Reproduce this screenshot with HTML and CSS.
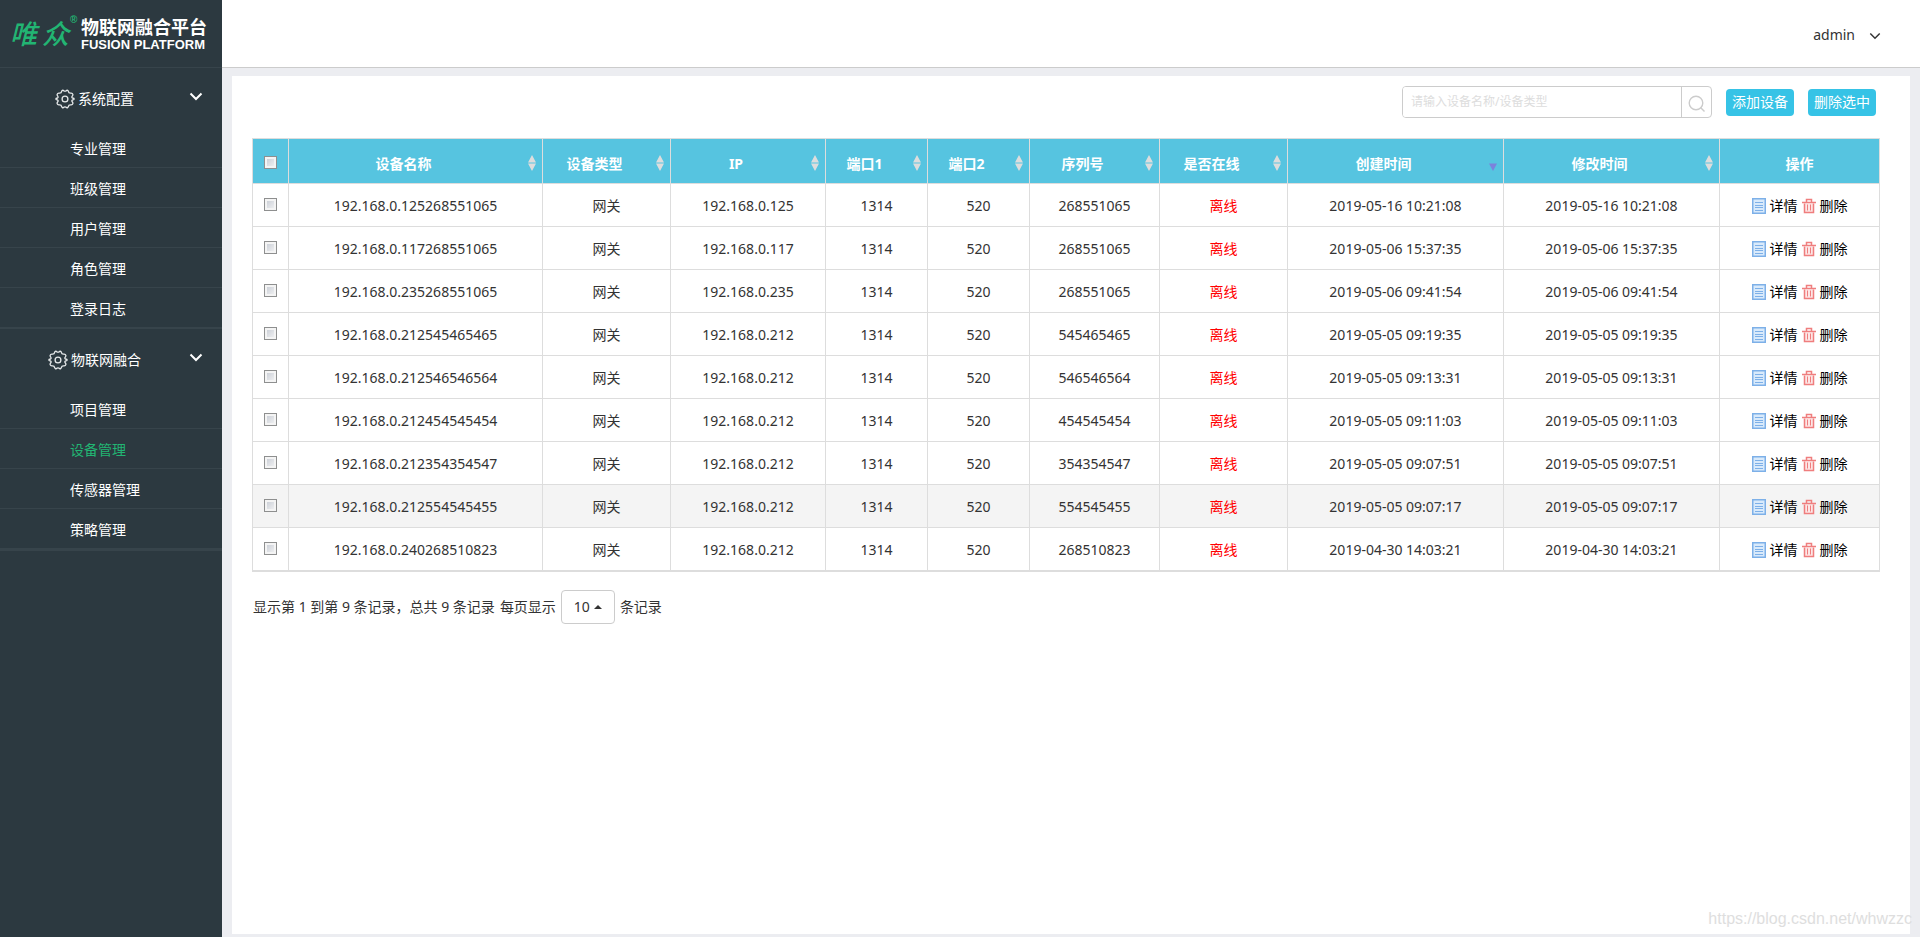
FILE: index.html
```html
<!DOCTYPE html>
<html lang="zh-CN">
<head>
<meta charset="utf-8">
<title>物联网融合平台</title>
<link rel="stylesheet" href="styles.css">
</head>
<body>
<svg class="defs" aria-hidden="true">
  <symbol id="gear" viewBox="0 0 20 20"><path d="M6.6 2.4 Q7.2 .9 8.4 1.4 Q10 2.8 11.6 1.4 Q12.8 .9 13.4 2.4 Q13.6 4.4 15.8 4.2 Q17.4 4 17.9 5.4 Q18 6.4 17.2 7.2 Q16.4 8.2 17.4 9 Q19.2 9.3 19.2 10 Q19.2 10.7 17.4 11 Q16.4 11.8 17.2 12.8 Q18 13.6 17.9 14.6 Q17.4 16 15.8 15.8 Q13.6 15.6 13.4 17.6 Q12.8 19.1 11.6 18.6 Q10 17.2 8.4 18.6 Q7.2 19.1 6.6 17.6 Q6.4 15.6 4.2 15.8 Q2.6 16 2.1 14.6 Q2 13.6 2.8 12.8 Q3.6 11.8 2.6 11 Q.8 10.7 .8 10 Q.8 9.3 2.6 9 Q3.6 8.2 2.8 7.2 Q2 6.4 2.1 5.4 Q2.6 4 4.2 4.2 Q6.4 4.4 6.6 2.4Z"/><circle cx="10" cy="10" r="2.9"/></symbol>
  <symbol id="chevron" viewBox="0 0 14 10"><path d="M1.5 1.5 L7 7 L12.5 1.5"/></symbol>
  <symbol id="doc" viewBox="0 0 14 16"><rect x=".75" y=".75" width="12.5" height="14.5" fill="#d9eafb" stroke="#7db0e8" stroke-width="1.5"/><path d="M3 4.5h8M3 7.5h8M3 9.5h8M3 12.5h8" stroke="#7db0e8" fill="none"/></symbol>
  <symbol id="trash" viewBox="0 0 14 16"><path d="M2.5 5.5v9h9v-9" fill="#fde6e6" stroke="#ef7e7e" stroke-width="1.5"/><path d="M0 4.5h14M4.5 4V1.5h5V4" fill="none" stroke="#ef7e7e" stroke-width="1.5"/><path d="M5.5 6.5v6M8.5 6.5v6" stroke="#ef7e7e" fill="none"/></symbol>
  <symbol id="sort" viewBox="0 0 8 16"><path d="M4 0 L8 7.4 H0Z M0 8.6 H8 L4 16Z"/></symbol>
  <symbol id="sort-desc" viewBox="0 0 8 16"><path d="M0 8.6 H8 L4 16Z"/></symbol>
</svg>
<div class="app">
  <aside class="sidebar">
    <div class="logo">
      <div class="mark"><span>唯</span><span>众</span><sup>®</sup></div>
      <div class="name"><span class="name-cn">物联网融合平台</span><span class="name-en">FUSION PLATFORM</span></div>
    </div>
    <nav>
      <section class="group">
        <button class="group-head" type="button"><span class="group-label"><svg class="gear"><use href="#gear"/></svg>系统配置</span><svg class="arrow"><use href="#chevron"/></svg></button>
        <a class="item" href="#">专业管理</a>
        <a class="item" href="#">班级管理</a>
        <a class="item" href="#">用户管理</a>
        <a class="item" href="#">角色管理</a>
        <a class="item" href="#">登录日志</a>
      </section>
      <section class="group last">
        <button class="group-head" type="button"><span class="group-label"><svg class="gear"><use href="#gear"/></svg>物联网融合</span><svg class="arrow"><use href="#chevron"/></svg></button>
        <a class="item" href="#">项目管理</a>
        <a class="item active" href="#">设备管理</a>
        <a class="item" href="#">传感器管理</a>
        <a class="item" href="#">策略管理</a>
      </section>
    </nav>
  </aside>
  <div class="content">
    <header class="topbar"><button class="user" type="button">admin<svg class="user-arrow"><use href="#chevron"/></svg></button></header>
    <main class="panel">
      <div class="toolbar">
        <form class="search">
          <input type="text" placeholder="请输入设备名称/设备类型" aria-label="搜索设备">
          <button type="button" aria-label="搜索"><svg viewBox="0 0 18 18"><circle cx="8" cy="8" r="6.8"/><path d="M12.5 12.5 L16.5 16.5"/></svg></button>
        </form>
        <button class="btn" type="button">添加设备</button>
        <button class="btn" type="button">删除选中</button>
      </div>
      <table class="devices">
        <colgroup><col class="c-check"><col class="c-name"><col class="c-type"><col class="c-ip"><col class="c-port"><col class="c-port"><col class="c-serial"><col class="c-type"><col class="c-time"><col class="c-time"><col class="c-ops"></colgroup>
        <thead><tr>
          <th class="check"><input type="checkbox" aria-label="全选"></th>
          <th><div class="sortable">设备名称<svg><use href="#sort"/></svg></div></th>
          <th><div class="sortable">设备类型<svg><use href="#sort"/></svg></div></th>
          <th><div class="sortable">IP<svg><use href="#sort"/></svg></div></th>
          <th><div class="sortable">端口1<svg><use href="#sort"/></svg></div></th>
          <th><div class="sortable">端口2<svg><use href="#sort"/></svg></div></th>
          <th><div class="sortable">序列号<svg><use href="#sort"/></svg></div></th>
          <th><div class="sortable">是否在线<svg><use href="#sort"/></svg></div></th>
          <th><div class="sortable desc">创建时间<svg><use href="#sort-desc"/></svg></div></th>
          <th><div class="sortable">修改时间<svg><use href="#sort"/></svg></div></th>
          <th>操作</th>
        </tr></thead>
        <tbody id="rows"></tbody>
      </table>
      <div class="pager"><span>显示第 1 到第 9 条记录，总共 9 条记录</span><span>每页显示</span><button class="size" type="button">10<i class="caret"></i></button><span>条记录</span></div>
    </main>
  </div>
</div>
<div class="watermark">https://blog.csdn.net/whwzzc</div>
<script src="rows.js"></script>
</body>
</html>
```
FILE: styles.css
```css
* { box-sizing: border-box; }
body { margin: 0; font: 14px/20px "Noto Sans", "Noto Sans CJK SC", sans-serif; color: #333; background: #ecedf1; }
button, input { font: inherit; color: inherit; margin: 0; }
button { cursor: pointer; padding: 0; border: 0; background: none; }
a { color: inherit; text-decoration: none; }
.defs { display: none; }
.app { display: flex; min-height: 100vh; }

.sidebar { flex: 0 0 222px; background: #2c3940; color: #fff; }
.logo { display: flex; height: 68px; padding: 14px 0 0 10px; border-bottom: 1px solid #37444b; }
.mark { display: flex; gap: 5px; width: 71px; color: #22b573; font: italic 500 27px/38px "Noto Sans CJK SC", sans-serif; }
.mark sup { font: bold 10px/12px "Liberation Sans", sans-serif; margin-left: -4px; }
.name { display: flex; flex-direction: column; white-space: nowrap; }
.name-cn { font: bold 18px/24px "Noto Sans CJK SC", sans-serif; }
.name-en { font: bold 13px/13px "Liberation Sans", sans-serif; }
.group { border-bottom: 1px solid #37444b; }
.group.last { border-bottom-width: 2px; }
.group-head { display: flex; align-items: center; width: 100%; height: 60px; padding: 2px 19px 0 0; }
.group-label { flex: 1; display: flex; align-items: center; justify-content: center; gap: 3px; }
.gear { width: 20px; height: 20px; fill: none; stroke: #e6e9ea; stroke-width: 1.3; }
.arrow { width: 14px; height: 10px; margin-bottom: 4px; fill: none; stroke: #fff; stroke-width: 2; }
.item { display: block; height: 40px; padding-left: 70px; line-height: 42px; border-bottom: 1px solid #37444b; }
.item.active { color: #22b573; }

.content { flex: 1; min-width: 0; display: flex; flex-direction: column; }
.topbar { display: flex; align-items: center; justify-content: flex-end; height: 68px; padding: 2px 39px 0 0; background: #fff; border-bottom: 1px solid #ccc; }
.user { display: flex; align-items: center; gap: 14px; }
.user-arrow { width: 12px; height: 9px; margin-top: 3px; fill: none; stroke: #333; stroke-width: 1.7; }
.panel { flex: 1; margin: 8px 10px 3px; padding: 10px 30px 0 20px; background: #fff; }
.toolbar { display: flex; align-items: center; justify-content: flex-end; gap: 14px; padding-right: 4px; }
.search { display: flex; width: 310px; height: 32px; border: 1px solid #ccc; border-radius: 4px; overflow: hidden; }
.search input { flex: 1; min-width: 0; padding: 0 8px; border: 0; outline: 0; font-size: 12px; }
.search input::placeholder { color: #ddd; opacity: 1; }
.search button { width: 30px; border-left: 1px solid #ccc; display: flex; align-items: center; justify-content: center; }
.search svg { width: 18px; height: 18px; margin-top: 3px; fill: none; stroke: #ccc; stroke-width: 1.4; }
.btn { width: 68px; height: 27px; color: #fff; background: #36c3e6; border-radius: 4px; }

.devices { width: 100%; margin-top: 20px; table-layout: fixed; border-collapse: collapse; border: 1px solid #ddd; border-bottom-width: 2px; }
.c-check { width: 36px; }
.c-name { width: 254px; }
.c-type { width: 128px; }
.c-ip { width: 155px; }
.c-port { width: 102px; }
.c-serial { width: 130px; }
.c-time { width: 216px; }
.c-ops { width: 160px; }
.devices th, .devices td { border: 1px solid #ddd; text-align: center; white-space: nowrap; vertical-align: middle; }
.devices th { height: 45px; padding: 6px 0 0; background: #56c4e0; color: #fff; }
.devices td { height: 43px; padding: 2px 0 0; }
.devices .check { padding: 0 0 1px; }
.devices th.check { padding: 2px 0 0; }
.devices tbody tr.hover { background: #f4f4f4; }
.devices input { appearance: none; display: block; width: 13px; height: 13px; margin: 0 auto; border: 1px solid #8e8f8f; background: linear-gradient(135deg, #c4c9d2, #f6f6f6) padding-box; box-shadow: inset 0 0 0 2px #f4f4f4; }
.sortable { display: grid; grid-template-columns: 1fr 26px; align-items: center; padding: 0 6px 0 8px; }
.sortable svg { width: 8px; height: 16px; margin: -2px 0 0 auto; fill: #ddd; }
.sortable.desc svg { fill: #7b83dc; }
.devices .offline { color: #f00; }
.ops { display: flex; align-items: center; justify-content: center; gap: 4px; color: #000; }
.ops a { display: flex; align-items: center; gap: 4px; }
.ops svg { width: 14px; height: 16px; }

.pager { display: flex; align-items: center; gap: 5px; margin-top: 18px; padding-left: 1px; }
.size { display: flex; align-items: center; justify-content: center; gap: 4px; width: 54px; height: 34px; border: 1px solid #ccc; border-radius: 4px; }
.caret { border: 4px solid transparent; border-top: 0; border-bottom-color: #333; }
.watermark { position: absolute; right: 8px; bottom: 8px; font: 16px/20px "Liberation Sans", sans-serif; color: #dedede; }
```
FILE: rows.js
```js
const devices = [
  ["192.168.0.125268551065", "192.168.0.125", "268551065", "2019-05-16 10:21:08"],
  ["192.168.0.117268551065", "192.168.0.117", "268551065", "2019-05-06 15:37:35"],
  ["192.168.0.235268551065", "192.168.0.235", "268551065", "2019-05-06 09:41:54"],
  ["192.168.0.212545465465", "192.168.0.212", "545465465", "2019-05-05 09:19:35"],
  ["192.168.0.212546546564", "192.168.0.212", "546546564", "2019-05-05 09:13:31"],
  ["192.168.0.212454545454", "192.168.0.212", "454545454", "2019-05-05 09:11:03"],
  ["192.168.0.212354354547", "192.168.0.212", "354354547", "2019-05-05 09:07:51"],
  ["192.168.0.212554545455", "192.168.0.212", "554545455", "2019-05-05 09:07:17"],
  ["192.168.0.240268510823", "192.168.0.212", "268510823", "2019-04-30 14:03:21"]
];
document.getElementById("rows").innerHTML = devices.map(([name, ip, serial, time], i) => `
<tr${i === 7 ? ' class="hover"' : ""}>
  <td class="check"><input type="checkbox" aria-label="选择 ${name}"></td>
  <td>${name}</td><td>网关</td><td>${ip}</td><td>1314</td><td>520</td><td>${serial}</td>
  <td class="offline">离线</td><td>${time}</td><td>${time}</td>
  <td><div class="ops"><a href="#"><svg><use href="#doc"/></svg>详情</a><a href="#"><svg><use href="#trash"/></svg>删除</a></div></td>
</tr>`).join("");
```
